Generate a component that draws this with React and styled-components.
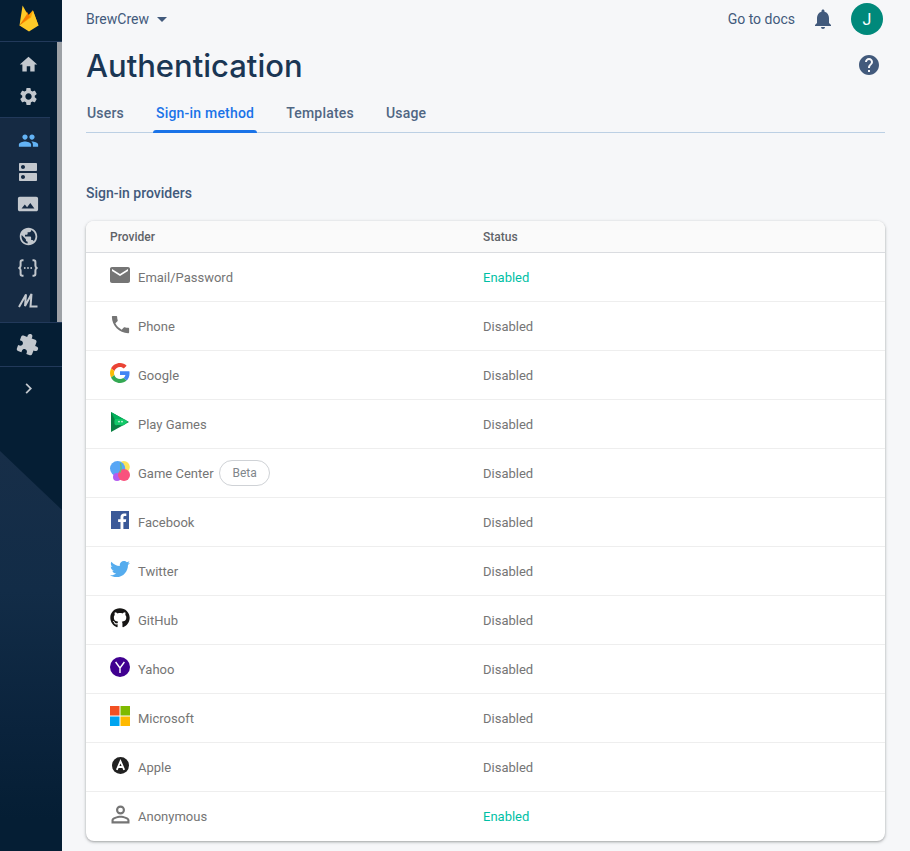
import React from 'react';
import styled, { createGlobalStyle } from 'styled-components';
import {
    MdHome, MdSettings, MdPeople, MdDns, MdPanorama, MdPublic, MdExtension, MdChevronRight,
    MdNotifications, MdHelp, MdEmail, MdPhone, MdPersonOutline, MdArrowDropDown,
} from 'react-icons/md';
import { FaTwitter, FaGithub } from 'react-icons/fa';

const GlobalStyle = createGlobalStyle`
    html, body {
        margin: 0;
        height: 100%;
        overflow: hidden;
        background: #f6f7f9;
        font-family: Roboto, "Liberation Sans", sans-serif;
    }
`;

const Page = styled.div`
    display: flex;
    height: 851px;
    overflow: hidden;
`;

const Sidebar = styled.nav`
    flex: 0 0 62px;
    display: flex;
    flex-direction: column;
    background: #051e34;
`;

const LogoBar = styled.div`
    height: 42px;
    display: flex;
    padding: 5px 0 0 19px;
    box-sizing: border-box;
    border-bottom: 1px solid #22395a;
`;

const Scroller = styled.div`
    display: flex;
    justify-content: space-between;
    height: 280px;
`;

const ScrollInner = styled.div`
    width: 57px;
`;

const ScrollThumb = styled.div`
    width: 5px;
    background: #9da1a6;
`;

const NavGroup = styled.div`
    width: ${p => p.$light ? '50px' : '57px'};
    box-sizing: border-box;
    padding: 6px 0 5px;
    background: ${p => p.$light ? '#152a43' : 'none'};
    border-top: ${p => p.$light ? '1px solid #22395a' : 'none'};
    height: ${p => p.$light ? '205px' : '75px'};
`;

const BottomGroup = styled.div`
    height: 43px;
    display: flex;
    align-items: center;
    border-top: 1px solid #22395a;
`;

const NavItem = styled.div`
    width: 56px;
    height: 32px;
    display: flex;
    align-items: center;
    justify-content: center;
    color: ${p => p.$active ? '#63b3f5' : '#c3c8ce'};
    font-size: ${p => p.$size || 21}px;
    & svg {
        transform: rotate(${p => p.$rotate || 0}deg);
    }
`;

const SideArt = styled.div`
    flex: 1;
    position: relative;
    overflow: hidden;
    &::before {
        content: '';
        position: absolute;
        left: 0;
        right: 0;
        top: 41px;
        bottom: 0;
        clip-path: polygon(0 0, 100% 59px, 100% 100%, 0 100%);
        background: linear-gradient(180deg, #172e48 0%, #122c47 35%, #0a233c 70%, #051e34 92%);
    }
`;

const Main = styled.main`
    flex: 1;
    min-width: 0;
    padding: 0 25px 0 24px;
`;

const TopBar = styled.header`
    height: 38px;
    display: flex;
    align-items: center;
    justify-content: space-between;
`;

const Project = styled.div`
    display: flex;
    align-items: center;
    gap: 1px;
    color: #425a7c;
    font-size: 14px;
`;

const TopRight = styled.div`
    display: flex;
    align-items: center;
    margin-right: 2px;
`;

const DocsLink = styled.a`
    color: #425a7c;
    font-size: 14px;
    margin-right: 16px;
`;

const Bell = styled.span`
    display: flex;
    color: #425a7c;
    font-size: 24px;
    margin-right: 16px;
`;

const Avatar = styled.div`
    width: 32px;
    height: 32px;
    border-radius: 50%;
    background: #00897b;
    color: #fff;
    font-size: 16px;
    display: flex;
    align-items: center;
    justify-content: center;
`;

const TitleRow = styled.div`
    display: flex;
    justify-content: space-between;
    align-items: center;
    height: 54px;
    padding-bottom: 2px;
`;

const Title = styled.h1`
    margin: 0;
    font-family: Inter, sans-serif;
    font-size: 31px;
    font-weight: 500;
    color: #1a3654;
`;

const HelpButton = styled.span`
    display: flex;
    color: #425a7c;
    font-size: 24px;
    margin-right: 4px;
`;

const Tabs = styled.div`
    display: flex;
    gap: 26px;
    height: 38px;
    border-bottom: 1px solid #bcd0e4;
`;

const Tab = styled.div`
    position: relative;
    padding: 0 3px;
    margin-left: ${p => p.$first ? '-2px' : '0'};
    font-size: 14px;
    font-weight: 500;
    letter-spacing: 0.2px;
    line-height: 38px;
    color: ${p => p.$active ? '#1a73e8' : '#506683'};
    ${p => p.$active && `
        &::after {
            content: '';
            position: absolute;
            left: 0;
            right: 0;
            bottom: -1px;
            height: 3px;
            border-radius: 3px 3px 0 0;
            background: #1a73e8;
        }
    `}
`;

const SectionTitle = styled.h2`
    margin: 52px 0 20px;
    font-size: 14px;
    font-weight: 500;
    line-height: 16px;
    color: #425a7c;
`;

const Card = styled.section`
    background: #fff;
    border-radius: 8px;
    box-shadow: 0 1px 2px rgba(60, 64, 67, 0.3), 0 1px 3px 1px rgba(60, 64, 67, 0.15);
    overflow: hidden;
`;

const TableHead = styled.div`
    display: grid;
    grid-template-columns: 373px 1fr;
    height: 32px;
    box-sizing: border-box;
    align-items: center;
    background: #fafafa;
    border-bottom: 1px solid #dadce0;
    padding-left: 24px;
    font-size: 12px;
    font-weight: 500;
    color: #5f6368;
`;

const Row = styled.div`
    display: grid;
    grid-template-columns: 373px 1fr;
    align-items: center;
    height: 49px;
    box-sizing: border-box;
    padding-left: 24px;
    border-bottom: 1px solid ${p => p.$last ? 'transparent' : '#eeeeee'};
    font-size: 13px;
    color: #757575;
`;

const ProviderCell = styled.div`
    display: flex;
    align-items: center;
    gap: 8px;
`;

const IconBox = styled.span`
    width: 20px;
    height: 20px;
    display: flex;
    align-items: center;
    justify-content: center;
    margin-bottom: 4px;
    font-size: ${p => p.$size || 20}px;
    color: ${p => p.$color || '#757575'};
    & svg {
        flex-shrink: 0;
    }
`;

const Beta = styled.span`
    height: 24px;
    padding: 0 12px 0 13px;
    margin-left: -3px;
    border: 1px solid #cfd2d6;
    border-radius: 13px;
    display: inline-flex;
    align-items: center;
    font-size: 12px;
    color: #80868b;
`;

const Status = styled.div`
    color: ${p => p.$on ? '#00bfa5' : '#757575'};
`;

const FirebaseLogo = () => (
    <svg width="20" height="27" viewBox="0 0 20 27">
        <path d="M0.5 20.5 L13.8 5.2 L19.5 20.5 Z" fill="#ffa000" />
        <path d="M0.5 20.5 L7.8 6.5 L11 12 Z" fill="#f57c00" />
        <path d="M0.5 20.5 L3.6 0.5 L8.2 8.8 Z" fill="#ffca28" />
        <path d="M0.5 20.5 L12 12.5 L14 5.5 L19.5 20.5 L10 26.5 Z" fill="#ffca28" />
    </svg>
);

const FunctionsIcon = () => (
    <svg width="20" height="18" viewBox="0 0 20 18" fill="none" stroke="currentColor" strokeWidth="2">
        <path d="M5.5 1.2 H4.4 Q2.6 1.2 2.6 3 V6.5 Q2.6 8 1.4 9 Q2.6 10 2.6 11.5 V15 Q2.6 16.8 4.4 16.8 H5.5" />
        <path d="M14.5 1.2 H15.6 Q17.4 1.2 17.4 3 V6.5 Q17.4 8 18.6 9 Q17.4 10 17.4 11.5 V15 Q17.4 16.8 15.6 16.8 H14.5" />
        <g fill="currentColor" stroke="none">
            <circle cx="6.8" cy="9" r="0.9" />
            <circle cx="10" cy="9" r="0.9" />
            <circle cx="13.2" cy="9" r="0.9" />
        </g>
    </svg>
);

const MlIcon = () => (
    <svg width="20" height="16" viewBox="0 0 20 16" fill="none" stroke="currentColor" strokeWidth="2">
        <path d="M1 15 L8 2.5 L7 14 L13.5 2 L12.5 14.6 H19.5" />
    </svg>
);

const GoogleIcon = () => (
    <svg width="20" height="20" viewBox="0 0 48 48">
        <path fill="#ea4335" d="M24 9.5c3.9 0 6.9 1.6 9.1 3.6l6.8-6.8C35.8 2.5 30.4 0 24 0 14.6 0 6.5 5.4 2.6 13.2l7.9 6.2C12.4 13.7 17.7 9.5 24 9.5z" />
        <path fill="#4285f4" d="M46.9 24.5c0-1.6-.1-3.1-.4-4.5H24v9h12.9c-.6 3-2.3 5.5-4.8 7.2l7.7 6c4.5-4.2 7.1-10.3 7.1-17.7z" />
        <path fill="#fbbc05" d="M10.5 28.6c-.5-1.4-.8-3-.8-4.6s.3-3.2.8-4.6l-7.9-6.2C.9 16.5 0 20.1 0 24s.9 7.5 2.6 10.8l7.9-6.2z" />
        <path fill="#34a853" d="M24 48c6.5 0 11.9-2.1 15.8-5.8l-7.7-6c-2.1 1.4-4.9 2.3-8.1 2.3-6.3 0-11.6-4.2-13.5-9.9l-7.9 6.2C6.5 42.6 14.6 48 24 48z" />
    </svg>
);

const PlayGamesIcon = () => (
    <svg width="20" height="20" viewBox="0 0 20 20">
        <path d="M1 0 L19 10 L1 20 Z" fill="#0a8043" />
        <path d="M1 0 L14 7.2 L5 8 Z" fill="#02b25c" />
        <path d="M5 7 H13 Q15.5 7 17.5 9.6 Q16 12 14 13 Q12 14 10 13 H7.5 Q5.5 14 4.5 12 Q3.8 9 5 7 Z" fill="#12c868" />
        <circle cx="9" cy="9.6" r="0.9" fill="#cdf5dd" />
        <circle cx="12" cy="9.6" r="0.9" fill="#cdf5dd" />
    </svg>
);

const GameCenterIcon = () => (
    <svg width="20" height="20" viewBox="0 0 20 20">
        <circle cx="13.8" cy="6" r="6" fill="#fde55a" />
        <circle cx="7.6" cy="7.6" r="7.6" fill="#58a6f5" />
        <circle cx="7" cy="16" r="4" fill="#b45cf0" />
        <circle cx="14" cy="14" r="6" fill="#f9527d" />
        <path d="M10.2 2 C11.4 5 11 9 10 11.5" stroke="#62c07a" strokeWidth="1.4" fill="none" />
    </svg>
);

const FacebookIcon = () => (
    <svg width="18" height="18" viewBox="0 0 18 18">
        <rect width="18" height="18" fill="#3b5998" />
        <path d="M12.4 18 V11 H14.8 L15.2 8.2 H12.4 V6.4 C12.4 5.6 12.7 5 13.8 5 H15.3 V2.5 C14.6 2.4 13.9 2.4 13.1 2.4 C11 2.4 9.5 3.7 9.5 6 V8.2 H7.1 V11 H9.5 V18 Z" fill="#fff" />
    </svg>
);

const YahooIcon = () => (
    <svg width="20" height="20" viewBox="0 0 20 20">
        <circle cx="10" cy="10" r="10" fill="#400090" />
        <path d="M5.6 5 L10 11 L14.4 5 M10 11 V16" stroke="#fff" strokeWidth="1.4" fill="none" />
    </svg>
);

const MicrosoftIcon = () => (
    <svg width="20" height="20" viewBox="0 0 20 20">
        <rect width="9.5" height="9.5" fill="#f25022" />
        <rect x="10.5" width="9.5" height="9.5" fill="#7fba00" />
        <rect y="10.5" width="9.5" height="9.5" fill="#00a4ef" />
        <rect x="10.5" y="10.5" width="9.5" height="9.5" fill="#ffb900" />
    </svg>
);

const AppleIcon = () => (
    <svg width="17" height="17" viewBox="0 0 17 17">
        <circle cx="8.5" cy="8.5" r="8.5" fill="#212121" />
        <path d="M4.8 12.8 L8.5 4.2 L12.2 12.8 M6 10 H11" stroke="#fff" strokeWidth="1.8" fill="none" />
    </svg>
);

const providers = [
    { name: 'Email/Password', icon: <MdEmail />, size: 24, on: true },
    { name: 'Phone', icon: <MdPhone />, size: 23 },
    { name: 'Google', icon: <GoogleIcon /> },
    { name: 'Play Games', icon: <PlayGamesIcon /> },
    { name: 'Game Center', icon: <GameCenterIcon />, beta: true },
    { name: 'Facebook', icon: <FacebookIcon /> },
    { name: 'Twitter', icon: <FaTwitter />, color: '#55acee' },
    { name: 'GitHub', icon: <FaGithub />, color: '#161514' },
    { name: 'Yahoo', icon: <YahooIcon /> },
    { name: 'Microsoft', icon: <MicrosoftIcon /> },
    { name: 'Apple', icon: <AppleIcon /> },
    { name: 'Anonymous', icon: <MdPersonOutline />, size: 27, on: true },
];

const App = () => (
    <Page>
        <GlobalStyle />
        <Sidebar>
            <LogoBar><FirebaseLogo /></LogoBar>
            <Scroller>
                <ScrollInner>
                    <NavGroup>
                        <NavItem><MdHome /></NavItem>
                        <NavItem><MdSettings /></NavItem>
                    </NavGroup>
                    <NavGroup $light>
                        <NavItem $active><MdPeople /></NavItem>
                        <NavItem $size={24}><MdDns /></NavItem>
                        <NavItem $size={22}><MdPanorama /></NavItem>
                        <NavItem><MdPublic /></NavItem>
                        <NavItem><FunctionsIcon /></NavItem>
                        <NavItem><MlIcon /></NavItem>
                    </NavGroup>
                </ScrollInner>
                <ScrollThumb />
            </Scroller>
            <BottomGroup><NavItem $size={23} $rotate={20}><MdExtension /></NavItem></BottomGroup>
            <BottomGroup><NavItem><MdChevronRight /></NavItem></BottomGroup>
            <SideArt />
        </Sidebar>
        <Main>
            <TopBar>
                <Project>BrewCrew <MdArrowDropDown size={24} color="#425a7c" /></Project>
                <TopRight>
                    <DocsLink>Go to docs</DocsLink>
                    <Bell><MdNotifications /></Bell>
                    <Avatar>J</Avatar>
                </TopRight>
            </TopBar>
            <TitleRow>
                <Title>Authentication</Title>
                <HelpButton><MdHelp /></HelpButton>
            </TitleRow>
            <Tabs>
                <Tab $first>Users</Tab>
                <Tab $active>Sign-in method</Tab>
                <Tab>Templates</Tab>
                <Tab>Usage</Tab>
            </Tabs>
            <SectionTitle>Sign-in providers</SectionTitle>
            <Card>
                <TableHead>
                    <div>Provider</div>
                    <div>Status</div>
                </TableHead>
                {providers.map((p, i) => (
                    <Row key={p.name} $last={i === providers.length - 1}>
                        <ProviderCell>
                            <IconBox $size={p.size} $color={p.color}>{p.icon}</IconBox>
                            {p.name}
                            {p.beta && <Beta>Beta</Beta>}
                        </ProviderCell>
                        <Status $on={p.on}>{p.on ? 'Enabled' : 'Disabled'}</Status>
                    </Row>
                ))}
            </Card>
        </Main>
    </Page>
);

export default App;
